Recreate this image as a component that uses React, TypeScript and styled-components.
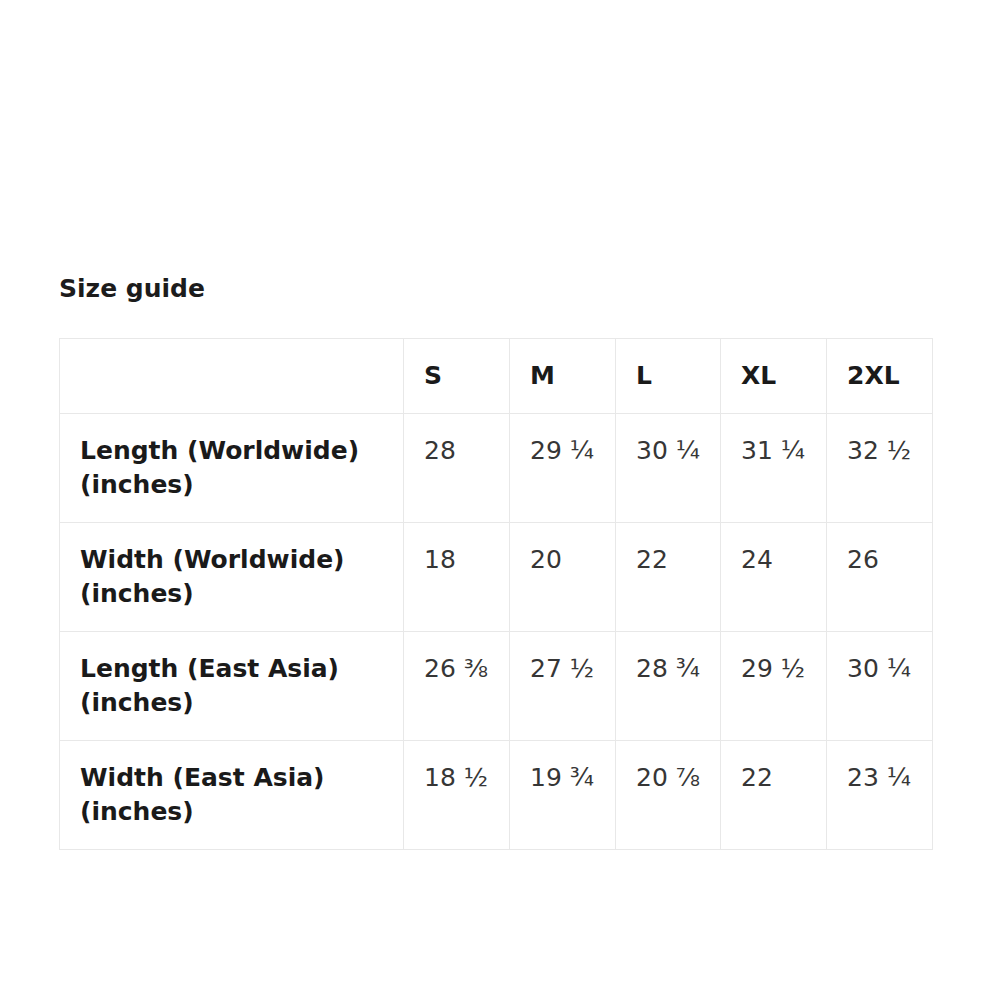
import React from "react";
import styled, { createGlobalStyle } from "styled-components";

const Global = createGlobalStyle`
  html, body { margin: 0; padding: 0; background: #ffffff; }
  body { font-family: "DejaVu Sans", Verdana, sans-serif; }
`;

const Page = styled.div`
  padding: 274px 68px 0 59px;
`;

const Title = styled.h2`
  margin: 0 0 34px 0;
  font-size: 25px;
  line-height: 30px;
  font-weight: 700;
  color: #1c1c1c;
`;

const Table = styled.table`
  width: 873px;
  border-collapse: collapse;
  table-layout: fixed;
  font-size: 25px;
  line-height: 34px;
`;

const Col = styled.col<{ $w: number }>`
  width: ${(p) => p.$w}px;
`;

const Cell = styled.td<{ $bold?: boolean }>`
  border: 1px solid #e8e8e8;
  padding: 20px 20px;
  vertical-align: top;
  text-align: left;
  font-weight: ${(p) => (p.$bold ? 700 : 400)};
  color: ${(p) => (p.$bold ? "#1a1a1a" : "#363636")};
  white-space: nowrap;
`;

const sizes = ["S", "M", "L", "XL", "2XL"];

const rows: { label: string[]; values: string[] }[] = [
  { label: ["Length (Worldwide)", "(inches)"], values: ["28", "29 ¼", "30 ¼", "31 ¼", "32 ½"] },
  { label: ["Width (Worldwide)", "(inches)"], values: ["18", "20", "22", "24", "26"] },
  { label: ["Length (East Asia)", "(inches)"], values: ["26 ⅜", "27 ½", "28 ¾", "29 ½", "30 ¼"] },
  { label: ["Width (East Asia)", "(inches)"], values: ["18 ½", "19 ¾", "20 ⅞", "22", "23 ¼"] },
];

export default function App() {
  return (
    <>
      <Global />
      <Page>
        <Title>Size guide</Title>
        <Table>
          <colgroup>
            <Col $w={344} />
            <Col $w={106} />
            <Col $w={106} />
            <Col $w={105} />
            <Col $w={106} />
            <Col $w={106} />
          </colgroup>
          <tbody>
            <tr>
              <Cell $bold></Cell>
              {sizes.map((s) => (
                <Cell $bold key={s}>{s}</Cell>
              ))}
            </tr>
            {rows.map((r) => (
              <tr key={r.label[0]}>
                <Cell $bold>
                  {r.label[0]}
                  <br />
                  {r.label[1]}
                </Cell>
                {r.values.map((v, i) => (
                  <Cell key={i}>{v}</Cell>
                ))}
              </tr>
            ))}
          </tbody>
        </Table>
      </Page>
    </>
  );
}
